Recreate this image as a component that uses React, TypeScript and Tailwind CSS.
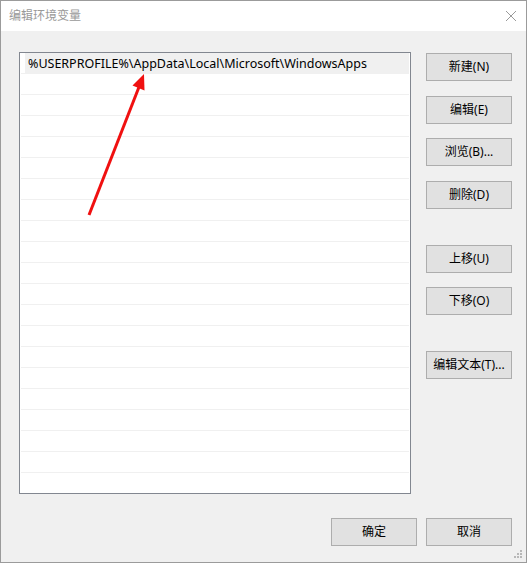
import React from 'react';

const ui = { fontFamily: '"Noto Sans", "Noto Sans CJK SC", sans-serif' };

const entries = ['%USERPROFILE%\\AppData\\Local\\Microsoft\\WindowsApps'];

function Btn({ label, className = '' }: { label: string; className?: string }) {
  return (
    <div
      className={`w-[86px] h-[28px] flex items-center justify-center bg-[#e1e1e1] border border-[#adadad] text-[12px] text-black leading-none ${className}`}
    >
      {label}
    </div>
  );
}

export default function App() {
  const rows = Array.from({ length: 21 }, (_, i) => entries[i] ?? '');

  return (
    <div className="relative w-[527px] h-[563px] flex flex-col border border-[#9b9b9b] bg-[#f0f0f0] select-none" style={ui}>
      {/* title bar */}
      <div className="h-[30px] bg-white flex items-center justify-between pl-[8px] pr-[9px]">
        <span className="text-[12px] text-[#999999]">编辑环境变量</span>
        <svg width="12" height="12" viewBox="0 0 12 12">
          <path d="M1 1 L11 11 M11 1 L1 11" stroke="#9a9a9a" strokeWidth="1" />
        </svg>
      </div>

      <div className="flex-1 flex flex-col">
        <div className="flex pt-[21px] pl-[18px]">
          {/* list */}
          <div className="w-[392px] h-[442px] bg-white border border-[#828790] overflow-hidden">
            {rows.map((r, i) => (
              <div key={i} className="h-[21px] flex border-b border-[#f0f0f0] mx-[1px]">
                {i === 0 ? (
                  <div className="ml-[4px] flex-1 bg-[#f0f0f0] flex items-center pl-[3px] pt-[2px] text-[12.5px] text-black leading-none">
                    {r}
                  </div>
                ) : null}
              </div>
            ))}
          </div>

          {/* buttons */}
          <div className="ml-[15px] flex flex-col">
            <Btn label="新建(N)" className="mt-[1px]" />
            <Btn label="编辑(E)" className="mt-[15px]" />
            <Btn label="浏览(B)..." className="mt-[14px]" />
            <Btn label="删除(D)" className="mt-[15px]" />
            <Btn label="上移(U)" className="mt-[36px]" />
            <Btn label="下移(O)" className="mt-[14px]" />
            <Btn label="编辑文本(T)..." className="mt-[36px]" />
          </div>
        </div>

        <div className="flex justify-end gap-[9px] pr-[14px] mt-[24px]">
          <Btn label="确定" />
          <Btn label="取消" />
        </div>
      </div>

      {/* resize grip */}
      <svg className="absolute right-[3px] bottom-[3px]" width="10" height="10" viewBox="0 0 10 10">
        <rect x="7" y="1" width="2" height="2" fill="#b8b8b8" />
        <rect x="4" y="4" width="2" height="2" fill="#b8b8b8" />
        <rect x="7" y="4" width="2" height="2" fill="#b8b8b8" />
        <rect x="1" y="7" width="2" height="2" fill="#b8b8b8" />
        <rect x="4" y="7" width="2" height="2" fill="#b8b8b8" />
        <rect x="7" y="7" width="2" height="2" fill="#b8b8b8" />
      </svg>

      {/* red annotation arrow */}
      <svg className="absolute left-[-1px] top-[-1px] pointer-events-none" width="527" height="563">
        <line x1="89" y1="215" x2="139" y2="87" stroke="#f01010" strokeWidth="3" />
        <polygon points="144,74 132.5,85.5 144.5,90.5" fill="#f01010" />
      </svg>
    </div>
  );
}
